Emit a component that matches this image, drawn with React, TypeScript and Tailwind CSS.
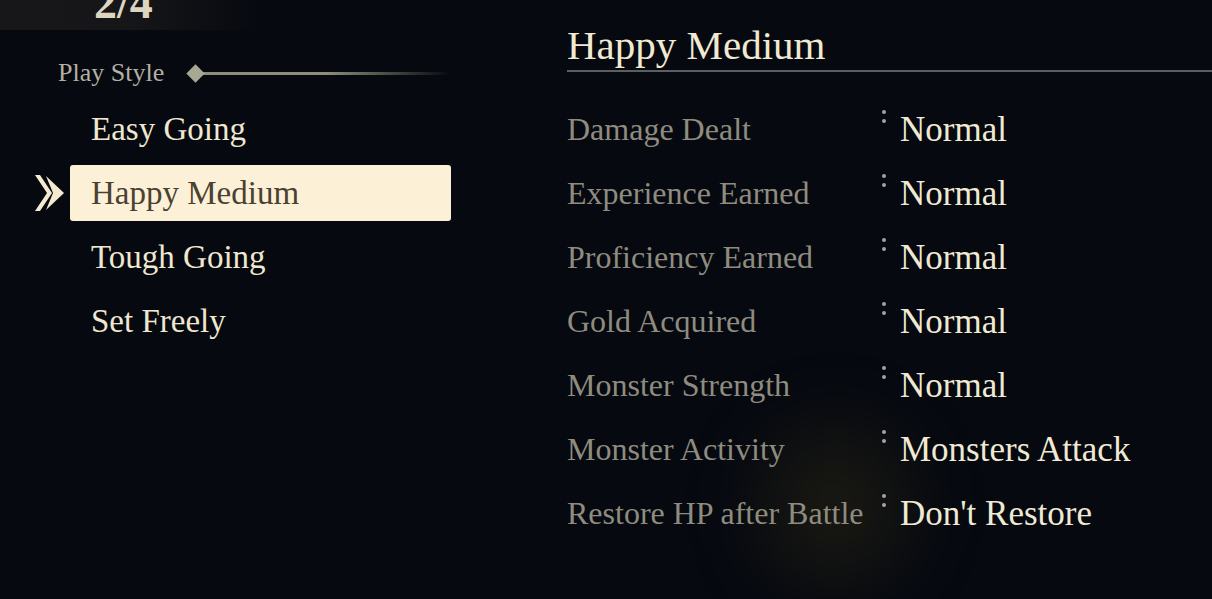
import React from 'react';

const styles = ['Easy Going', 'Happy Medium', 'Tough Going', 'Set Freely'];

const settings = [
  { label: 'Damage Dealt', value: 'Normal' },
  { label: 'Experience Earned', value: 'Normal' },
  { label: 'Proficiency Earned', value: 'Normal' },
  { label: 'Gold Acquired', value: 'Normal' },
  { label: 'Monster Strength', value: 'Normal' },
  { label: 'Monster Activity', value: 'Monsters Attack' },
  { label: 'Restore HP after Battle', value: "Don't Restore" },
];

const serif = { fontFamily: '"Liberation Serif", "DejaVu Serif", serif' };

const Chevron: React.FC = () => (
  <svg width="32" height="42" viewBox="0 0 32 42" className="shrink-0">
    <polygon points="1,3 6,3 18,21 6,39 1,39 13,21" fill="#f3ead0" />
    <polygon points="12,4 30,21 12,38 19,21" fill="#f3ead0" />
  </svg>
);

// raised two-dot separator between label and value
const Colon: React.FC = () => (
  <div className="w-[33px] shrink-0 self-start pt-[9px] pl-[15px] flex flex-col gap-[5px]">
    <div className="w-[4px] h-[4px] rounded-full bg-[#a2a3a2]"></div>
    <div className="w-[4px] h-[4px] rounded-full bg-[#a2a3a2]"></div>
  </div>
);

const App: React.FC = () => {
  const selected = 1;

  return (
    <div className="relative w-full h-[599px] overflow-hidden bg-[#060910] text-[#efe7cf]" style={serif}>
      {/* soft glow behind the last rows */}
      <div className="absolute left-[765px] top-[430px] w-[140px] h-[150px] rounded-full bg-[#6b5a1c]/20 blur-2xl pointer-events-none"></div>

      <div className="relative flex">
        {/* left column */}
        <div className="w-[567px] shrink-0 flex flex-col">
          {/* page counter */}
          <div className="h-[30px] w-[260px] overflow-hidden bg-gradient-to-r from-[#17171a] via-[#161618] to-transparent">
            <div className="pl-[94px] -mt-[20px] text-[46px] leading-none font-bold text-[#ddd5c2]">2/4</div>
          </div>

          {/* section title */}
          <div className="mt-[27px] h-[32px] flex items-center pl-[58px]">
            <span className="text-[26px] text-[#b3b0a1] leading-none">Play Style</span>
            <div className="ml-[25px] w-[13px] h-[13px] rotate-45 bg-[#a7a893]"></div>
            <div className="h-[3px] w-[248px] bg-gradient-to-r from-[#8d8f79] via-[#8d8f79] to-transparent"></div>
          </div>

          {/* options */}
          <div className="mt-[12px] flex flex-col gap-[8px]">
            {styles.map((s, i) => (
              <div key={s} className="flex items-center h-[56px]">
                <div className="w-[70px] flex justify-end pr-[4px]">{i === selected && <Chevron />}</div>
                <div
                  className={
                    i === selected
                      ? 'w-[381px] h-[56px] flex items-center pl-[21px] rounded-[3px] bg-[#fcf1d7] text-[#4a4131]'
                      : 'w-[381px] h-[56px] flex items-center pl-[21px] text-[#efe7cf]'
                  }
                >
                  <span className="text-[33px] leading-none">{s}</span>
                </div>
              </div>
            ))}
          </div>
        </div>

        {/* right column */}
        <div className="flex-1 flex flex-col">
          <div className="h-[70px] flex items-end pb-[4px]">
            <span className="text-[41px] leading-none text-[#f1e9d1]">Happy Medium</span>
          </div>
          <div className="h-[2px] bg-[#5c5f60]"></div>

          <div className="mt-[29px] flex flex-col gap-[8px]">
            {settings.map((r) => (
              <div key={r.label} className="flex items-center h-[56px]">
                <span className="w-[300px] shrink-0 text-[32px] leading-none text-[#8f8c7f] whitespace-nowrap">{r.label}</span>
                <Colon />
                <span className="text-[35px] leading-none text-[#f0e9d3] whitespace-nowrap">{r.value}</span>
              </div>
            ))}
          </div>
        </div>
      </div>
    </div>
  );
};

export default App;
